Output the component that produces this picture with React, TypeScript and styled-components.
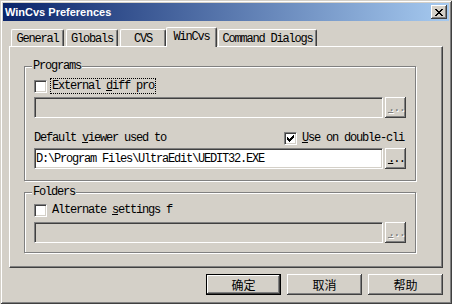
import styled, { createGlobalStyle } from 'styled-components';

const face = '#d4d0c8';
const mono = '"Liberation Mono", "Noto Sans CJK SC", monospace';

const GlobalStyle = createGlobalStyle`
    html, body {
        margin: 0;
        padding: 0;
        background: ${face};
    }
`;

const Window = styled.div`
    width: 452px;
    height: 304px;
    box-sizing: border-box;
    padding: 3px;
    display: flex;
    flex-direction: column;
    background: ${face};
    box-shadow: inset 1px 1px ${face}, inset -1px -1px #404040, inset 2px 2px #fff, inset -2px -2px #808080;
    font-family: ${mono};
    font-size: 12px;
    letter-spacing: -1.2px;
    color: #000;
    white-space: nowrap;
`;

const TitleBar = styled.div`
    height: 18px;
    flex: none;
    display: flex;
    align-items: center;
    justify-content: space-between;
    padding: 0 2px;
    background: linear-gradient(to right, #0a246a, #a6caf0);
`;

const Title = styled.span`
    font-family: 'Liberation Sans', Arial, sans-serif;
    font-weight: bold;
    font-size: 11px;
    letter-spacing: 0;
    color: #fff;
`;

const Raised = styled.div`
    box-sizing: border-box;
    background: ${face};
    box-shadow: inset -1px -1px #404040, inset 1px 1px #fff, inset -2px -2px #808080, inset 2px 2px ${face};
    display: flex;
    align-items: center;
    justify-content: center;
`;

const CloseBtn = styled(Raised)`
    width: 16px;
    height: 14px;
`;

const Body = styled.div`
    flex: 1;
    display: flex;
    flex-direction: column;
    padding: 6px 6px 0;
`;

const TabStrip = styled.div`
    height: 19px;
    display: flex;
    align-items: flex-end;
    padding-left: 1px;
`;

const Tab = styled.div<{ $w: number; $active?: boolean }>`
    position: relative;
    z-index: ${p => (p.$active ? 1 : 0)};
    box-sizing: border-box;
    width: ${p => p.$w}px;
    height: ${p => (p.$active ? 20 : 17)}px;
    margin: ${p => (p.$active ? '0 0 -1px -1px' : '0 1px')};
    padding: ${p => (p.$active ? '0 0 2px' : '1px 0 0')};
    display: flex;
    align-items: center;
    justify-content: center;
    background: ${face};
    border-top: 1px solid #fff;
    border-left: 1px solid #fff;
    border-right: 1px solid #404040;
    border-radius: 2px 2px 0 0;
    box-shadow: inset -1px 0 #808080;
`;

const Panel = styled.div`
    height: 222px;
    box-sizing: border-box;
    display: flex;
    flex-direction: column;
    gap: 5px;
    padding: 13px 26px 0 14px;
    border-top: 1px solid #fff;
    border-left: 1px solid #fff;
    border-right: 1px solid #404040;
    border-bottom: 1px solid #404040;
    box-shadow: inset -1px -1px #808080;
`;

const Group = styled.fieldset<{ $pad: string }>`
    margin: 0;
    min-width: 0;
    padding: ${p => p.$pad};
    display: flex;
    flex-direction: column;
    border: 1px solid #808080;
    box-shadow: inset 1px 1px #fff, 1px 1px #fff;
`;

const Legend = styled.legend`
    margin-left: -2px;
    padding: 0 1px;
    line-height: 12px;
    background: ${face};
`;

const Row = styled.div<{ $gap?: number }>`
    height: 16px;
    margin-top: ${p => p.$gap ?? 0}px;
    display: flex;
    align-items: center;
    justify-content: space-between;
`;

const Check = styled.label`
    display: flex;
    align-items: center;
    gap: 3px;
`;

const Box = styled.span`
    width: 13px;
    height: 13px;
    flex: none;
    box-sizing: border-box;
    display: flex;
    align-items: center;
    justify-content: center;
    background: #fff;
    border: 1px solid;
    border-color: #808080 #fff #fff #808080;
    box-shadow: inset 1px 1px #404040, inset -1px -1px ${face};
`;

const Caption = styled.span<{ $focus?: boolean }>`
    line-height: 14px;
    padding: 0 1px;
    border: 1px ${p => (p.$focus ? 'dotted #000' : 'solid transparent')};
`;

const Key = styled.span`
    text-decoration: underline;
`;

const FieldRow = styled.div<{ $gap: number }>`
    height: 21px;
    margin-top: ${p => p.$gap}px;
    display: flex;
    gap: 2px;
`;

const Field = styled.div<{ $disabled?: boolean }>`
    flex: 1;
    box-sizing: border-box;
    padding: 0 1px;
    display: flex;
    align-items: center;
    background: ${p => (p.$disabled ? face : '#fff')};
    border: 1px solid;
    border-color: #808080 #fff #fff #808080;
    box-shadow: inset 1px 1px #404040, inset -1px -1px ${face};
`;

const Browse = styled(Raised)<{ $disabled?: boolean }>`
    width: 21px;
    flex: none;
    letter-spacing: -1.8px;
    padding-left: 1px;
    color: ${p => (p.$disabled ? '#808080' : '#000')};
    text-shadow: ${p => (p.$disabled ? '1px 1px #fff' : 'none')};
`;

const Buttons = styled.div`
    margin-top: 6px;
    display: flex;
    justify-content: flex-end;
    gap: 6px;
`;

const Button = styled(Raised)<{ $default?: boolean }>`
    width: 75px;
    height: 21px;
    font-family: 'Noto Sans CJK SC', sans-serif;
    font-size: 12px;
    letter-spacing: 0;
    border: ${p => (p.$default ? '1px solid #000' : 'none')};
`;

const CloseGlyph = () => (
    <svg width="8" height="7" viewBox="0 0 8 7" shapeRendering="crispEdges">
        <path d="M0 0h2v1h-2z M6 0h2v1h-2z M1 1h2v1h-2z M5 1h2v1h-2z M2 2h4v1h-4z M3 3h2v1h-2z M2 4h4v1h-4z M1 5h2v1h-2z M5 5h2v1h-2z M0 6h2v1h-2z M6 6h2v1h-2z" fill="#000" />
    </svg>
);

const Tick = () => (
    <svg width="7" height="7" viewBox="0 0 7 7" shapeRendering="crispEdges">
        <path d="M6 0h1v3h-1z M5 1h1v3h-1z M4 2h1v3h-1z M3 3h1v3h-1z M2 4h1v3h-1z M1 3h1v3h-1z M0 2h1v3h-1z" fill="#000" />
    </svg>
);

const Dots = () => (
    <>
        <Key>.</Key>..
    </>
);

const App = () => {
    return (
        <>
            <GlobalStyle />
            <Window>
                <TitleBar>
                    <Title>WinCvs Preferences</Title>
                    <CloseBtn>
                        <CloseGlyph />
                    </CloseBtn>
                </TitleBar>
                <Body>
                    <TabStrip>
                        <Tab $w={53}>General</Tab>
                        <Tab $w={52}>Globals</Tab>
                        <Tab $w={46}>CVS</Tab>
                        <Tab $w={51} $active>
                            WinCvs
                        </Tab>
                        <Tab $w={99}>Command Dialogs</Tab>
                    </TabStrip>
                    <Panel>
                        <Group $pad="6px 9px 11px">
                            <Legend>Programs</Legend>
                            <Row>
                                <Check>
                                    <Box />
                                    <Caption $focus>
                                        External <Key>d</Key>iff pro
                                    </Caption>
                                </Check>
                            </Row>
                            <FieldRow $gap={3}>
                                <Field $disabled />
                                <Browse $disabled>
                                    <Dots />
                                </Browse>
                            </FieldRow>
                            <Row $gap={12}>
                                <span>
                                    Default <Key>v</Key>iewer used to
                                </span>
                                <Check>
                                    <Box>
                                        <Tick />
                                    </Box>
                                    <Caption>
                                        <Key>U</Key>se on double-cli
                                    </Caption>
                                </Check>
                            </Row>
                            <FieldRow $gap={2}>
                                <Field>{'D:\\Program Files\\UltraEdit\\UEDIT32.EXE'}</Field>
                                <Browse>
                                    <Dots />
                                </Browse>
                            </FieldRow>
                        </Group>
                        <Group $pad="4px 9px 9px">
                            <Legend>Folders</Legend>
                            <Row>
                                <Check>
                                    <Box />
                                    <Caption>
                                        Alternate <Key>s</Key>ettings f
                                    </Caption>
                                </Check>
                            </Row>
                            <FieldRow $gap={4}>
                                <Field $disabled />
                                <Browse $disabled>
                                    <Dots />
                                </Browse>
                            </FieldRow>
                        </Group>
                    </Panel>
                    <Buttons>
                        <Button $default>确定</Button>
                        <Button>取消</Button>
                        <Button>帮助</Button>
                    </Buttons>
                </Body>
            </Window>
        </>
    );
};

export default App;
